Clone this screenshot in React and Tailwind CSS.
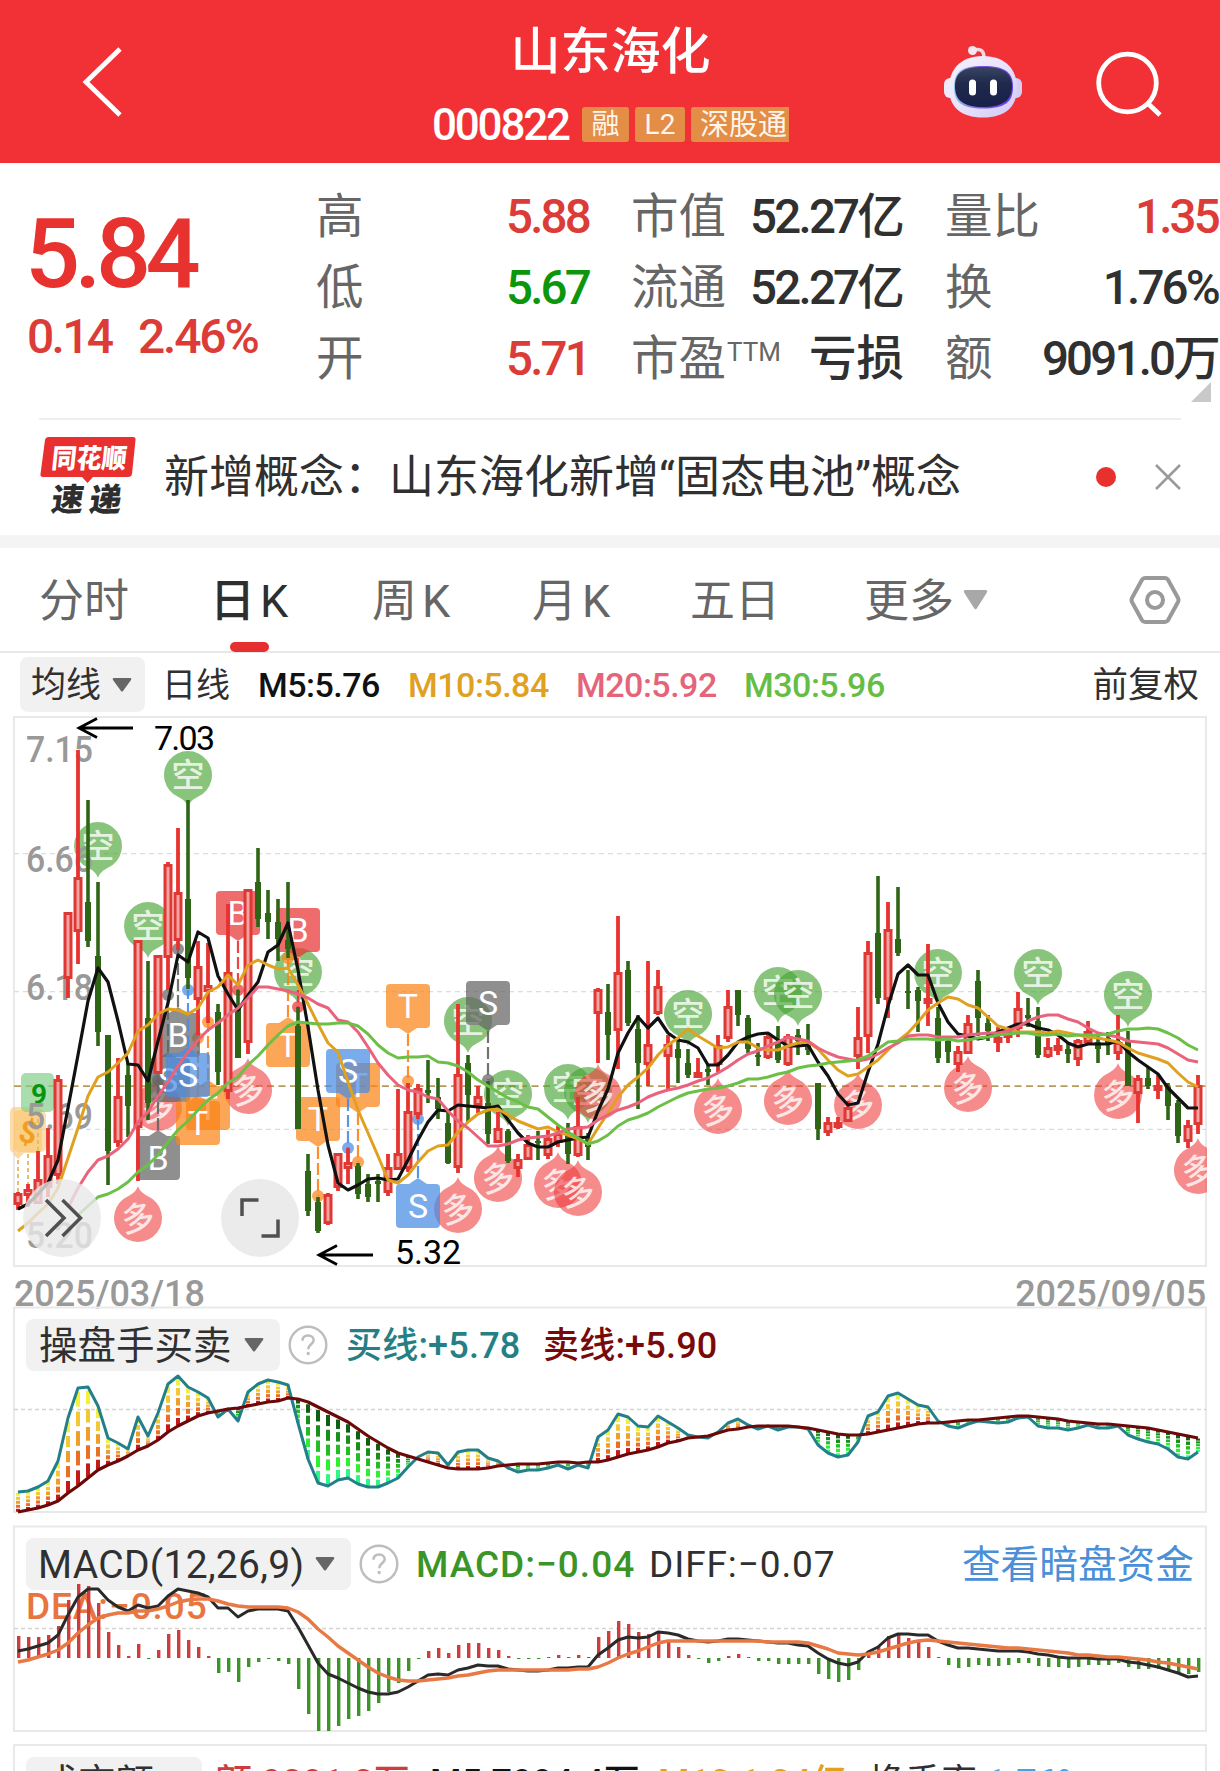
import React from "react";
import { clsx } from "clsx";

const FONT = "font-['Roboto','Noto_Sans_CJK_SC',sans-serif]";

// candle: [direction, high, bodyTop, bodyBottom, low]
const candles = [
  ["r", 1192, 1194, 1203, 1210], ["r", 1184, 1190, 1194, 1207], ["r", 1151, 1180, 1202, 1203], ["r", 1128, 1156, 1186, 1197],
  ["r", 1075, 1080, 1174, 1184], ["r", 912, 913, 977, 998], ["r", 750, 878, 930, 964], ["g", 800, 902, 941, 947],
  ["g", 882, 956, 1032, 1046], ["g", 1035, 1035, 1151, 1185], ["r", 1058, 1097, 1141, 1147], ["g", 1063, 1075, 1106, 1137],
  ["r", 940, 941, 1126, 1181], ["g", 961, 1018, 1103, 1120], ["r", 955, 956, 1072, 1073], ["r", 862, 865, 956, 990],
  ["r", 828, 893, 939, 950], ["g", 800, 899, 978, 989], ["r", 941, 967, 998, 1035], ["r", 943, 986, 990, 1023],
  ["g", 1004, 1012, 1072, 1085], ["r", 904, 973, 1090, 1099], ["g", 990, 1008, 1058, 1058], ["r", 889, 890, 1041, 1054],
  ["g", 848, 882, 919, 927], ["g", 890, 913, 922, 939], ["g", 899, 922, 939, 961], ["g", 882, 940, 949, 958],
  ["g", 1007, 1026, 1129, 1129], ["g", 1154, 1171, 1211, 1216], ["g", 1197, 1202, 1231, 1233], ["r", 1193, 1195, 1222, 1225],
  ["r", 1153, 1154, 1186, 1191], ["r", 1148, 1163, 1167, 1184], ["g", 1163, 1166, 1194, 1199], ["g", 1174, 1184, 1197, 1202],
  ["g", 1174, 1181, 1184, 1202], ["r", 1154, 1168, 1191, 1196], ["r", 1089, 1154, 1168, 1170], ["r", 1083, 1112, 1167, 1172],
  ["r", 1084, 1089, 1113, 1119], ["g", 1060, 1090, 1093, 1103], ["g", 1078, 1097, 1109, 1119], ["g", 1112, 1123, 1163, 1164],
  ["r", 1004, 1075, 1166, 1173], ["g", 1055, 1063, 1095, 1122], ["r", 1086, 1097, 1104, 1113], ["g", 1081, 1103, 1134, 1144],
  ["r", 1112, 1129, 1141, 1143], ["g", 1129, 1131, 1161, 1163], ["r", 1154, 1160, 1167, 1177], ["r", 1135, 1145, 1158, 1159],
  ["g", 1131, 1141, 1143, 1160], ["r", 1130, 1139, 1154, 1159], ["r", 1126, 1134, 1141, 1147], ["g", 1123, 1132, 1154, 1164],
  ["r", 1097, 1127, 1154, 1157], ["g", 1133, 1138, 1147, 1160], ["r", 988, 990, 1012, 1063], ["g", 984, 1012, 1035, 1060],
  ["r", 916, 973, 1029, 1069], ["g", 961, 970, 1023, 1026], ["g", 1015, 1029, 1063, 1109], ["r", 961, 1045, 1063, 1086],
  ["r", 970, 987, 1012, 1015], ["r", 1035, 1045, 1055, 1089], ["g", 1038, 1049, 1058, 1083], ["g", 1049, 1063, 1075, 1078],
  ["r", 1058, 1073, 1076, 1077], ["g", 1064, 1069, 1072, 1085], ["r", 1035, 1046, 1063, 1072], ["r", 990, 1007, 1037, 1042],
  ["g", 990, 990, 1015, 1026], ["g", 1015, 1018, 1049, 1053], ["g", 1043, 1055, 1057, 1066], ["r", 1034, 1037, 1056, 1059],
  ["g", 1026, 1042, 1060, 1063], ["r", 1034, 1037, 1063, 1066], ["g", 1029, 1035, 1041, 1055], ["g", 1024, 1045, 1050, 1055],
  ["g", 1083, 1083, 1129, 1140], ["r", 1117, 1123, 1131, 1136], ["r", 1117, 1123, 1126, 1129], ["r", 1101, 1108, 1120, 1121],
  ["r", 1007, 1038, 1055, 1069], ["r", 941, 953, 1035, 1053], ["g", 876, 933, 998, 1004], ["r", 902, 930, 998, 1018],
  ["g", 887, 939, 953, 956], ["g", 970, 991, 993, 1009], ["g", 987, 990, 1001, 1032], ["r", 944, 999, 1002, 1026],
  ["g", 1007, 1018, 1058, 1063], ["g", 1040, 1041, 1052, 1063], ["r", 1046, 1052, 1063, 1072], ["r", 1015, 1024, 1052, 1053],
  ["g", 970, 981, 1018, 1036], ["g", 1015, 1023, 1031, 1041], ["r", 1027, 1038, 1041, 1052], ["r", 1027, 1032, 1036, 1043],
  ["r", 992, 1009, 1027, 1037], ["g", 998, 1015, 1018, 1027], ["g", 1007, 1021, 1055, 1058], ["r", 1038, 1048, 1055, 1058],
  ["r", 1038, 1046, 1049, 1055], ["g", 1043, 1049, 1054, 1063], ["r", 1039, 1041, 1058, 1066], ["r", 1021, 1032, 1041, 1042],
  ["g", 1033, 1042, 1049, 1063], ["g", 1032, 1038, 1045, 1055], ["r", 1015, 1043, 1052, 1060], ["g", 1031, 1040, 1086, 1086],
  ["r", 1075, 1079, 1092, 1123], ["g", 1067, 1078, 1086, 1089], ["r", 1075, 1086, 1089, 1099], ["g", 1083, 1087, 1106, 1120],
  ["g", 1100, 1103, 1136, 1143], ["r", 1120, 1126, 1140, 1148], ["r", 1075, 1086, 1123, 1134],
];

const ma5 = [
  1209, 1204, 1194, 1183, 1160, 1108, 1055, 1001, 968, 982, 1021, 1064, 1065, 1081, 1041, 1003, 955, 962, 932, 938,
  976, 994, 1010, 995, 982, 952, 945, 923, 970, 1027, 1090, 1145, 1183, 1190, 1185, 1179, 1178, 1180, 1179, 1160,
  1140, 1122, 1110, 1111, 1105, 1106, 1107, 1108, 1106, 1120, 1133, 1143, 1147, 1147, 1142, 1140, 1138, 1137, 1111, 1089,
  1053, 1033, 1017, 1028, 1018, 1033, 1040, 1042, 1048, 1065, 1065, 1055, 1042, 1037, 1034, 1033, 1040, 1046, 1046, 1045,
  1062, 1076, 1094, 1105, 1103, 1072, 1044, 1006, 974, 965, 975, 975, 1003, 1022, 1034, 1036, 1039, 1037, 1032, 1028,
  1024, 1024, 1028, 1030, 1035, 1043, 1047, 1044, 1044, 1044, 1041, 1052, 1060, 1067, 1074, 1088, 1098, 1108, 1108,
];
const ma10 = [
  1231, 1223, 1213, 1204, 1188, 1158, 1128, 1096, 1077, 1072, 1063, 1053, 1031, 1025, 1014, 1009, 1010, 1014, 1008, 992,
  987, 975, 985, 965, 960, 965, 969, 968, 985, 1004, 1024, 1043, 1052, 1082, 1110, 1133, 1156, 1180, 1183, 1175,
  1162, 1151, 1146, 1145, 1132, 1122, 1114, 1110, 1109, 1115, 1121, 1125, 1129, 1127, 1132, 1135, 1139, 1144, 1128, 1113,
  1097, 1085, 1077, 1068, 1055, 1045, 1038, 1029, 1036, 1042, 1048, 1047, 1042, 1042, 1048, 1050, 1050, 1046, 1043, 1042,
  1049, 1060, 1070, 1076, 1074, 1067, 1060, 1050, 1041, 1033, 1022, 1010, 1003, 997, 999, 1005, 1008, 1017, 1026, 1029,
  1032, 1032, 1032, 1033, 1031, 1033, 1035, 1037, 1038, 1040, 1042, 1048, 1053, 1056, 1059, 1063, 1073, 1082, 1087,
];
const ma20 = [
  1208, 1188, 1172, 1160, 1156, 1149, 1139, 1122, 1112, 1096, 1082, 1066, 1052, 1040, 1030, 1023, 1015, 1008, 998, 987,
  987, 989, 991, 994, 998, 1004, 1008, 1020, 1022, 1032, 1047, 1063, 1075, 1085, 1090, 1092, 1097, 1099, 1111, 1121,
  1128, 1137, 1146, 1146, 1144, 1140, 1138, 1137, 1136, 1133, 1129, 1128, 1127, 1120, 1115, 1110, 1107, 1103, 1097, 1093,
  1090, 1088, 1085, 1081, 1078, 1073, 1067, 1060, 1054, 1051, 1046, 1042, 1037, 1039, 1041, 1048, 1053, 1057, 1059, 1061,
  1059, 1054, 1048, 1043, 1036, 1035, 1035, 1037, 1037, 1037, 1035, 1034, 1033, 1033, 1031, 1027, 1021, 1017, 1015, 1015,
  1019, 1022, 1028, 1033, 1035, 1037, 1041, 1042, 1043, 1044, 1048, 1054, 1060, 1062,
];
const ma30 = [
  1215, 1206, 1197, 1194, 1189, 1182, 1172, 1165, 1155, 1142, 1130, 1121, 1110, 1100, 1093, 1083, 1077, 1065, 1056, 1045,
  1035, 1026, 1022, 1023, 1024, 1024, 1023, 1023, 1026, 1034, 1045, 1053, 1058, 1057, 1057, 1056, 1062, 1063, 1066, 1072,
  1080, 1086, 1092, 1098, 1102, 1107, 1109, 1117, 1125, 1132, 1138, 1144, 1141, 1135, 1126, 1120, 1117, 1113, 1107, 1102,
  1097, 1093, 1091, 1089, 1088, 1086, 1083, 1079, 1079, 1077, 1074, 1072, 1068, 1066, 1065, 1063, 1062, 1061, 1060, 1056,
  1049, 1042, 1041, 1039, 1039, 1039, 1040, 1039, 1041, 1040, 1038, 1037, 1035, 1034, 1033, 1033, 1035, 1035, 1034, 1036,
  1035, 1035, 1035, 1034, 1031, 1029, 1029, 1028, 1029, 1033, 1038, 1045, 1050,
];

const buyLine = [
  1492, 1491, 1487, 1481, 1461, 1418, 1388, 1387, 1406, 1438, 1443, 1449, 1417, 1436, 1413, 1384, 1376, 1387, 1392, 1398,
  1417, 1409, 1421, 1392, 1384, 1380, 1382, 1385, 1423, 1459, 1483, 1486, 1480, 1478, 1484, 1487, 1487, 1483, 1478, 1467,
  1457, 1452, 1453, 1465, 1452, 1450, 1450, 1458, 1461, 1468, 1472, 1470, 1470, 1468, 1465, 1469, 1465, 1468, 1437, 1430,
  1414, 1417, 1426, 1427, 1416, 1422, 1428, 1435, 1437, 1438, 1432, 1423, 1419, 1425, 1429, 1426, 1430, 1427, 1427, 1429,
  1445, 1453, 1457, 1455, 1442, 1416, 1412, 1396, 1393, 1399, 1405, 1407, 1421, 1426, 1428, 1424, 1421, 1422, 1423, 1422,
  1418, 1417, 1426, 1428, 1428, 1430, 1428, 1425, 1428, 1428, 1426, 1435, 1439, 1442, 1444, 1449, 1457, 1459, 1452,
];
const sellLine = [
  1512, 1510, 1508, 1505, 1501, 1493, 1486, 1478, 1470, 1465, 1461, 1456, 1450, 1446, 1440, 1432, 1426, 1421, 1416, 1413,
  1411, 1409, 1408, 1406, 1404, 1402, 1401, 1398, 1399, 1402, 1407, 1412, 1417, 1422, 1429, 1436, 1442, 1448, 1453, 1456,
  1459, 1462, 1465, 1468, 1469, 1469, 1469, 1468, 1466, 1465, 1464, 1464, 1464, 1463, 1462, 1462, 1463, 1462, 1462, 1460,
  1457, 1454, 1452, 1450, 1447, 1443, 1441, 1438, 1437, 1436, 1433, 1430, 1429, 1427, 1426, 1426, 1426, 1426, 1427, 1428,
  1430, 1432, 1434, 1435, 1435, 1434, 1432, 1430, 1428, 1426, 1424, 1423, 1423, 1422, 1421, 1420, 1420, 1419, 1418, 1417,
  1416, 1416, 1417, 1418, 1419, 1421, 1422, 1423, 1424, 1424, 1425, 1426, 1427, 1428, 1430, 1432, 1434, 1436, 1438,
];

const MACD_ZERO = 1658;
const macdBars = [
  1636, 1637, 1637, 1635, 1626, 1600, 1584, 1586, 1603, 1632, 1645, 1656, 1644, 1659, 1650, 1634, 1630, 1640, 1647, 1656,
  1673, 1672, 1682, 1667, 1662, 1659, 1661, 1664, 1689, 1714, 1731, 1731, 1726, 1719, 1716, 1711, 1703, 1692, 1683, 1671,
  1659, 1651, 1648, 1653, 1645, 1643, 1643, 1648, 1650, 1656, 1659, 1659, 1659, 1657, 1655, 1657, 1655, 1657, 1637, 1631,
  1621, 1624, 1632, 1634, 1633, 1641, 1647, 1655, 1659, 1663, 1661, 1656, 1654, 1657, 1661, 1661, 1664, 1664, 1664, 1664,
  1674, 1679, 1682, 1680, 1670, 1651, 1647, 1636, 1634, 1638, 1640, 1647, 1657, 1665, 1668, 1667, 1665, 1666, 1666, 1665,
  1663, 1663, 1666, 1667, 1667, 1668, 1667, 1665, 1665, 1665, 1663, 1667, 1669, 1669, 1669, 1670, 1674, 1674, 1672,
];
const diffLine = [
  1651, 1649, 1646, 1643, 1635, 1615, 1597, 1589, 1589, 1600, 1607, 1611, 1605, 1608, 1606, 1596, 1589, 1591, 1593, 1597,
  1608, 1608, 1617, 1611, 1609, 1609, 1609, 1611, 1627, 1645, 1663, 1674, 1678, 1683, 1688, 1692, 1694, 1694, 1692, 1687,
  1681, 1675, 1674, 1675, 1670, 1668, 1665, 1666, 1666, 1669, 1670, 1671, 1671, 1670, 1668, 1668, 1667, 1667, 1655, 1648,
  1640, 1637, 1638, 1637, 1632, 1633, 1635, 1639, 1641, 1642, 1641, 1639, 1639, 1640, 1641, 1642, 1643, 1643, 1645, 1646,
  1653, 1659, 1663, 1665, 1662, 1652, 1647, 1638, 1634, 1634, 1635, 1635, 1641, 1645, 1648, 1648, 1649, 1650, 1651, 1651,
  1651, 1652, 1654, 1655, 1657, 1658, 1658, 1658, 1659, 1659, 1659, 1662, 1663, 1665, 1667, 1670, 1673, 1677, 1676,
];
const deaLine = [
  1662, 1660, 1657, 1654, 1650, 1643, 1633, 1625, 1618, 1615, 1613, 1613, 1611, 1611, 1609, 1606, 1602, 1600, 1599, 1599,
  1601, 1604, 1606, 1607, 1607, 1607, 1607, 1608, 1612, 1619, 1629, 1637, 1646, 1653, 1660, 1667, 1673, 1677, 1680, 1681,
  1681, 1680, 1679, 1678, 1676, 1675, 1673, 1671, 1670, 1670, 1670, 1670, 1670, 1670, 1670, 1670, 1669, 1669, 1667, 1663,
  1658, 1654, 1651, 1647, 1643, 1641, 1641, 1641, 1641, 1641, 1641, 1641, 1641, 1641, 1641, 1642, 1642, 1642, 1642, 1643,
  1646, 1649, 1653, 1654, 1655, 1654, 1652, 1649, 1646, 1643, 1641, 1640, 1641, 1642, 1643, 1644, 1645, 1646, 1647, 1648,
  1648, 1649, 1650, 1651, 1652, 1653, 1655, 1655, 1656, 1657, 1657, 1658, 1659, 1660, 1662, 1663, 1665, 1667, 1669,
];

const shortPins = [
  [188, 775], [98, 846], [148, 926], [298, 972], [468, 1021], [508, 1094], [568, 1088], [588, 1091],
  [688, 1014], [778, 991], [798, 994], [938, 973], [1038, 973], [1128, 995],
];
const longPins = [
  [138, 1218], [158, 1107], [248, 1090], [458, 1209], [498, 1178], [558, 1184], [578, 1192], [598, 1096],
  [718, 1110], [788, 1101], [858, 1105], [968, 1088], [1118, 1095], [1198, 1170],
];

// trade flags: [x, centre y, letter, colour, y of the anchor dot]
const RED = "#e83333";
const GRAY = "#646464";
const BLUE = "#478ce5";
const ORANGE = "#fb8317";
const flags = [
  [298, 930, "B", RED, 1007],
  [238, 913, "B", RED, 990],
  [288, 1045, "T", ORANGE, 958],
  [158, 1158, "B", GRAY, 1080],
  [168, 1080, "S", GRAY, 995],
  [208, 1108, "T", ORANGE, 1022],
  [198, 1123, "T", ORANGE, 1038],
  [178, 1035, "B", GRAY, 949],
  [188, 1075, "S", BLUE, 990],
  [318, 1119, "T", ORANGE, 1196],
  [358, 1085, "T", ORANGE, 1162],
  [348, 1071, "S", BLUE, 1148],
  [408, 1006, "T", ORANGE, 1081],
  [488, 1003, "S", GRAY, 1080],
  [418, 1206, "S", BLUE, 1119],
];

const px = (i) => 18 + i * 10;
const toPoints = (values, start = 0) =>
  values.map((y, i) => `${px(i + start)},${y}`).join(" ");

function Line({ data, start, color, width = 3 }) {
  return (
    <polyline
      points={toPoints(data, start)}
      fill="none"
      stroke={color}
      strokeWidth={width}
      strokeLinejoin="round"
    />
  );
}

function Candle({ i, c }) {
  const [dir, high, top, bottom, low] = c;
  const x = px(i);
  if (dir === "g") {
    return (
      <g fill="#2f6516">
        <rect x={x - 1.8} y={high} width="3.6" height={low - high} />
        <rect x={x - 3} y={top} width="6" height={Math.max(bottom - top, 2)} />
      </g>
    );
  }
  return (
    <g>
      <rect x={x - 1.9} y={high} width="3.8" height={low - high} fill="#e83230" />
      <rect
        x={x - 3}
        y={top + 0.5}
        width="6"
        height={Math.max(bottom - top, 1)}
        fill="#f3a3a0"
        stroke="#dd3834"
        strokeWidth="3"
      />
    </g>
  );
}

function Pin({ x, y, up }) {
  return (
    <g>
      <path
        d={
          up
            ? `M${x} ${y - 32}C${x + 2} ${y - 26} ${x + 6} ${y - 24} ${x + 10} ${y - 21.8}A24 24 0 1 1 ${x - 10} ${y - 21.8}C${x - 6} ${y - 24} ${x - 2} ${y - 26} ${x} ${y - 32}Z`
            : `M${x} ${y + 32}C${x + 2} ${y + 26} ${x + 6} ${y + 24} ${x + 10} ${y + 21.8}A24 24 0 1 0 ${x - 10} ${y + 21.8}C${x - 6} ${y + 24} ${x - 2} ${y + 26} ${x} ${y + 32}Z`
        }
        fill={up ? "#ef3e3e" : "#4aa535"}
        fillOpacity={up ? 0.6 : 0.65}
      />
      <text
        x={x}
        y={y + 12}
        textAnchor="middle"
        fontSize="33"
        fontWeight="500"
        fill="#fff"
        fillOpacity="0.8"
        transform={up ? `rotate(-10 ${x} ${y})` : undefined}
      >
        {up ? "多" : "空"}
      </text>
    </g>
  );
}

function Flag({ x, y, letter, color, dot }) {
  const down = dot > y;
  const edge = down ? y + 22 : y - 22;
  const tip = down ? y + 28 : y - 28;
  return (
    <g>
      <path d={`M${x} ${tip}V${dot}`} stroke={color} strokeWidth="2.2" strokeDasharray="12 4" opacity="0.9" />
      <circle cx={x} cy={dot} r="6" fill={color} fillOpacity="0.72" />
      <g fill={color} fillOpacity="0.72">
        <rect x={x - 22} y={y - 22} width="44" height="44" rx="4" />
        <path d={`M${x - 9} ${edge}L${x} ${tip}L${x + 9} ${edge}Z`} />
      </g>
      <text x={x} y={y + 12} textAnchor="middle" fontSize="34" fill="#fff">
        {letter}
      </text>
    </g>
  );
}

function AxisLabel({ y, children }) {
  return (
    <text x="26" y={y} fontSize="37" fontWeight="500" fill="#999" textLength="67" lengthAdjust="spacingAndGlyphs">
      {children}
    </text>
  );
}

function CandleChart() {
  return (
    <svg viewBox="0 716 1220 551" className={clsx("block h-[551px] w-[1220px]", FONT)}>
      <clipPath id="plot">
        <rect x="8" y="716" width="1199" height="551" />
      </clipPath>
      <rect x="14" y="717" width="1192" height="549" fill="none" stroke="#e9e9e9" strokeWidth="2" />
      <g stroke="#dcdcdc" strokeWidth="1.3" strokeDasharray="5 4">
        <path d="M14 853.7H1206M14 991.6H1206M14 1129.4H1206" />
      </g>

      <g stroke="#e3bd72" strokeWidth="2" strokeDasharray="4 3">
        <path d="M18 1160V1192M28 1154V1184" />
        <path d="M38 1112V1151" stroke="#5aa84c" />
      </g>
      <path d="M14 1086.2H1206" stroke="#b59a5c" strokeWidth="1.8" strokeDasharray="7 4.5" />

      <g clipPath="url(#plot)">
        {shortPins.map(([x, y]) => (
          <Pin key={`${x}`} x={x} y={y} />
        ))}
        {longPins.map(([x, y]) => (
          <Pin key={`${x}`} x={x} y={y} up />
        ))}
        {flags.map(([x, y, letter, color, dot]) => (
          <Flag key={`${x}-${y}`} x={x} y={y} letter={letter} color={color} dot={dot} />
        ))}
      </g>

      <rect x="10" y="1107" width="32" height="46" rx="5" fill="#fbc46c" fillOpacity="0.6" />
      <rect x="14" y="1110" width="32" height="42" rx="5" fill="#fbc46c" fillOpacity="0.55" />
      <path d="M12 1153L18 1159L24 1153Z" fill="#fbd9a0" />
      <text x="28" y="1143" textAnchor="middle" fontSize="31" fontWeight="700" fill="#f0a020" transform="rotate(14 28 1133)">
        $
      </text>
      <rect x="21" y="1073" width="33" height="39" rx="5" fill="#86cf8c" fillOpacity="0.7" />
      <text x="39" y="1104" textAnchor="middle" fontSize="28" fontWeight="700" fill="#0b940b">
        9
      </text>

      <AxisLabel y={762}>7.15</AxisLabel>
      <AxisLabel y={872}>6.66</AxisLabel>
      <AxisLabel y={1000}>6.18</AxisLabel>
      <AxisLabel y={1129}>5.69</AxisLabel>
      <AxisLabel y={1248}>5.20</AxisLabel>

      {candles.map((c, i) => (
        <Candle key={i} i={i} c={c} />
      ))}
      <Line data={ma5} color="#111" width={3.2} />
      <Line data={ma10} color="#e0a020" />
      <Line data={ma20} start={5} color="#e9637c" />
      <Line data={ma30} start={6} color="#6cbf47" />

      <g fill="none" stroke="#000" strokeWidth="2.8">
        <path d="M133 728H79M97 718.5L79 728L97 737.5" />
        <path d="M373 1255H319M337 1245.5L319 1255L337 1264.5" />
      </g>
      <g fontSize="34" fill="#000">
        <text x="154" y="750" textLength="61">7.03</text>
        <text x="395" y="1264" textLength="66">5.32</text>
      </g>
    </svg>
  );
}

const warm = ["#f2f03c", "#f2c934", "#ee9f2a", "#ea6f22", "#c41a1a"];
const cool = ["#0f5f12", "#178f19", "#22bd25", "#2df02f", "#2df786"];

function TraderChart() {
  return (
    <svg viewBox="0 1306 1220 208" className="col-start-1 row-start-1 block h-[208px] w-[1220px]">
      <rect x="14" y="1307.5" width="1192" height="204.5" fill="none" stroke="#e9e9e9" strokeWidth="2" />
      <path d="M14 1409.5H1206" stroke="#d4d4d4" strokeWidth="1.3" strokeDasharray="4 3" />
      {buyLine.map((buy, i) => {
        const sell = sellLine[i];
        const top = Math.min(buy, sell);
        const step = Math.abs(buy - sell) / 5;
        const colors = buy < sell ? warm : cool;
        return colors.map((color, k) => (
          <rect key={`${i}-${k}`} x={px(i) - 2} y={top + k * step + step * 0.2} width="4" height={step * 0.75} fill={color} />
        ));
      })}
      <Line data={buyLine} color="#23808a" />
      <Line data={sellLine} color="#6d0808" width={3.2} />
    </svg>
  );
}

function MacdChart() {
  return (
    <svg viewBox="0 1525 1220 208" className="col-start-1 row-start-1 block h-[208px] w-[1220px]">
      <rect x="14" y="1526.5" width="1192" height="204.5" fill="none" stroke="#e9e9e9" strokeWidth="2" />
      <path d="M14 1628.5H1206" stroke="#d4d4d4" strokeWidth="1.3" strokeDasharray="4 3" />
      {macdBars.map((y, i) => (
        <rect
          key={i}
          x={px(i) - 1}
          y={Math.min(y, MACD_ZERO)}
          width="3.4"
          height={Math.abs(y - MACD_ZERO)}
          fill={y < MACD_ZERO ? "#cc3d3d" : "#3b9427"}
        />
      ))}
      <Line data={diffLine} color="#2a2a2a" />
      <Line data={deaLine} color="#e87844" width={3.4} />
    </svg>
  );
}

function Caret({ className }) {
  return (
    <svg viewBox="0 0 20 14" className={className} preserveAspectRatio="none">
      <path d="M1.500 0H18.500Q20 0.500 19 2L11 13Q10 14 9 13L1 2Q0 0.500 1.500 0Z" fill="currentColor" />
    </svg>
  );
}

function Help() {
  return (
    <svg viewBox="0 0 40 40" className="h-10 w-10 shrink-0 text-[#bdbdbd]" fill="none" stroke="currentColor">
      <circle cx="20" cy="20" r="18.300" strokeWidth="2.400" />
      <path d="M14.500 15.800C14.500 12.300 17 10.500 20.200 10.500C23.500 10.500 25.700 12.500 25.700 15.300C25.700 19 20.200 19.200 20.200 24.300" strokeWidth="2.500" />
      <circle cx="20.200" cy="28.500" r="1" strokeWidth="1.500" />
    </svg>
  );
}

function Header() {
  return (
    <header className="flex h-[163px] bg-[#f23136] text-white">
      <div className="flex w-[432px] items-start pt-[46px] pl-[82px]">
        <svg viewBox="0 0 42 72" className="h-[72px] w-[42px]" fill="none" stroke="#fff" strokeWidth="4.800">
          <path d="M38 3L4 36L38 69" />
        </svg>
      </div>
      <div className="flex w-[357px] flex-col items-center">
        <h1 className="mt-[16px] text-[50px] leading-[72px] font-medium">山东海化</h1>
        <div className="mt-[17px] flex h-[38px] w-full items-center">
          <span className="w-[150px] shrink-0 pt-px text-[44px] font-medium tracking-[-2.200px]">000822</span>
          <div className="flex gap-[6px] text-[28px] leading-[36px] text-[#fff5ea]">
            <span className="h-[35px] w-[47px] rounded-[3px] bg-[#e38d46] text-center">融</span>
            <span className="h-[35px] w-[50px] rounded-[3px] bg-[#e38d46] text-center">L2</span>
            <span className="h-[35px] w-[98px] overflow-hidden rounded-l-[3px] bg-[#e38d46] pl-[9px] text-[29px] whitespace-nowrap">深股通</span>
          </div>
        </div>
      </div>
      <div className="flex flex-1 items-start pt-[42px] pl-[153px]">
        <svg viewBox="942 42 82 80" className="h-20 w-[82px]">
          <defs>
            <linearGradient id="shell" x1="0" y1="0" x2="1" y2="1">
              <stop offset="0" stopColor="#f6f2fc" />
              <stop offset="0.500" stopColor="#e9e2fb" />
              <stop offset="1" stopColor="#cfc8f6" />
            </linearGradient>
            <linearGradient id="rim" x1="0" y1="0" x2="1" y2="0">
              <stop offset="0" stopColor="#8fc4e6" />
              <stop offset="0.500" stopColor="#7d4fe0" />
              <stop offset="1" stopColor="#6a3fe6" />
            </linearGradient>
            <linearGradient id="visor" x1="0" y1="0" x2="0" y2="1">
              <stop offset="0" stopColor="#3a4463" />
              <stop offset="0.400" stopColor="#1f2a4c" />
              <stop offset="1" stopColor="#18204a" />
            </linearGradient>
          </defs>
          <path d="M974 50C981 48 984 51 984 58" fill="none" stroke="#f3d9e4" strokeWidth="3.500" />
          <circle cx="972.500" cy="50.500" r="4.500" fill="#f7e6ee" />
          <rect x="944" y="78" width="14" height="20" rx="6" fill="#efeafa" />
          <rect x="1008" y="78" width="14" height="20" rx="6" fill="#d5cdf7" />
          <path d="M983 56C1006 56 1017 70 1017 88C1017 107 1005 117.500 983 117.500C961 117.500 949 107 949 88C949 70 960 56 983 56Z" fill="url(#shell)" />
          <path d="M983 66C1006 66 1013 73 1013 87C1013 102 1005 108.500 983 108.500C961 108.500 954 102 954 87C954 73 960 66 983 66Z" fill="url(#rim)" />
          <path d="M983 67C1005 67 1012 74 1012 86.500C1012 100 1003 107 983 107C963 107 955 100 955 86.500C955 74 961 67 983 67Z" fill="url(#visor)" />
          <rect x="969" y="79.500" width="7" height="16" rx="3.500" fill="#fff" />
          <rect x="990" y="79.500" width="7" height="16" rx="3.500" fill="#fff" />
        </svg>
        <svg viewBox="1094 50 70 70" className="ml-[70px] mt-2 h-[70px] w-[70px]" fill="none" stroke="#fff" strokeWidth="4.800">
          <circle cx="1127.500" cy="83" r="28.800" />
          <path d="M1148 103.500L1160 115" />
        </svg>
      </div>
    </header>
  );
}

function Row({ label, value, className }) {
  return (
    <div className="flex h-[71px] items-center justify-between whitespace-nowrap">
      <span className="text-[47.500px] text-[#666]">{label}</span>
      <span className={clsx("pr-[2px] text-[47.500px] font-medium tracking-[-2.800px]", className)}>{value}</span>
    </div>
  );
}

function Quote() {
  return (
    <section className="flex h-[255px] pt-[19px]">
      <div className="w-[316px] pl-[25px] text-[#e7322f]">
        <div className="mt-[14px] text-[97px] leading-[116px] font-medium tracking-[-5.600px]">5.84</div>
        <div className="mt-[-5px] flex pl-[2px] text-[48px] leading-[60px] font-medium tracking-[-2.700px] text-[#dc3c38]">
          <span className="w-[111px]">0.14</span>
          <span className="tracking-[-2.200px]">2.46%</span>
        </div>
      </div>
      <div className="w-[275px]">
        <Row label="高" value="5.88" className="text-[#dc3c38]" />
        <Row label="低" value="5.67" className="text-[#0c960c]" />
        <Row label="开" value="5.71" className="text-[#dc3c38]" />
      </div>
      <div className="ml-[40px] w-[273px]">
        <Row label="市值" value="52.27亿" className="text-[#303030]" />
        <Row label="流通" value="52.27亿" className="text-[#303030]" />
        <Row
          label={
            <>
              市盈<span className="relative -top-[14px] ml-px text-[26px]">TTM</span>
            </>
          }
          value={<span className="-mr-[2px] tracking-normal">亏损</span>}
          className="text-[#303030]"
        />
      </div>
      <div className="ml-[41px] w-[275px]">
        <Row label="量比" value="1.35" className="text-[#dc3c38]" />
        <Row label="换" value="1.76%" className="text-[#303030]" />
        <Row label="额" value="9091.0万" className="text-[#303030]" />
        <svg viewBox="0 0 20 20" className="mt-[-13px] ml-[246px] h-5 w-5">
          <path d="M20 0V20H0Z" fill="#c9c9c9" />
        </svg>
      </div>
    </section>
  );
}

function News() {
  return (
    <section className="mx-[39px] flex h-[117px] items-center border-t-2 border-[#eee]">
      <svg viewBox="39 436 98 80" className={clsx("mb-1 h-20 w-[98px] shrink-0", FONT)}>
        <path d="M49 437H133Q136 437 135.500 440L132 474Q131.500 477 128 477H93L87.500 483L82 477H43Q40 477 40.500 474L45 440Q45.500 437 49 437Z" fill="#e8302e" />
        <text x="100" y="468" fontSize="27" fontWeight="900" fill="#fff" transform="skewX(-6)" textLength="75" lengthAdjust="spacingAndGlyphs">
          同花顺
        </text>
        <g fontSize="32" fontWeight="900" fill="#2e2e2e" transform="skewX(-8)">
          <text x="122" y="511">速</text>
          <text x="160" y="511">递</text>
        </g>
      </svg>
      <p className="ml-[27px] pt-px text-[45px] whitespace-nowrap text-[#303030]">新增概念：山东海化新增“固态电池”概念</p>
      <span className="mb-[2px] ml-auto h-5 w-5 shrink-0 rounded-full bg-[#e8302e]" />
      <svg viewBox="0 0 26 26" className="mb-[2px] ml-[39px] h-[26px] w-[26px]" stroke="#999" strokeWidth="2.500">
        <path d="M1 1L25 25M25 1L1 25" />
      </svg>
    </section>
  );
}

function Tabs() {
  return (
    <nav className="flex h-[105px] items-center border-b-2 border-[#e8e8e8] pt-[3px] pl-[39px] text-[45px] whitespace-nowrap text-[#666]">
      <span className="w-[173px] pt-px">分时</span>
      <span className="relative w-[160px] pt-px text-[#2e2e2e]">
        <span className="ml-[-2px] tracking-[5px]">
          <span className="font-medium">日</span>K
        </span>
        <i className="absolute top-[75px] left-[18px] h-[10px] w-[39px] rounded-full bg-[#e5302f]" />
      </span>
      <span className="w-[160px] pt-px tracking-[5px]">周K</span>
      <span className="w-[158px] pt-px tracking-[5px]">月K</span>
      <span className="w-[174px] pt-px">五日</span>
      <span className="pt-px">更多</span>
      <Caret className="mb-[2px] ml-[9px] h-5 w-[25px] text-[#a8a8a8]" />
      <svg viewBox="0 0 52 50" className="mb-[2px] ml-[141px] h-[50px] w-[52px]" fill="none" stroke="#999" strokeWidth="4">
        <path d="M16 3H36Q38 3 39 4.700L49 23Q50 25 49 27L39 45.300Q38 47 36 47H16Q14 47 13 45.300L3 27Q2 25 3 23L13 4.700Q14 3 16 3Z" />
        <circle cx="26" cy="25" r="8" />
      </svg>
    </nav>
  );
}

function MaRow() {
  return (
    <div className="flex h-[63px] items-center pl-5 text-[34px] whitespace-nowrap text-[#303030]">
      <button className="flex h-[55px] w-[125px] items-center rounded-lg bg-[#f1f1f1] pl-[11px]">
        <span className="pt-[3px] text-[35px]">均线</span>
        <Caret className="ml-[11px] h-[14px] w-5 text-[#666]" />
      </button>
      <span className="ml-[17px] w-[96px] pt-[2px]">日线</span>
      <span className="w-[150px] pt-[2px] font-medium tracking-[-0.500px] text-[#111]">M5:5.76</span>
      <span className="w-[168px] pt-[2px] font-medium tracking-[-0.500px] text-[#e0a020]">M10:5.84</span>
      <span className="w-[168px] pt-[2px] font-medium tracking-[-0.500px] text-[#e4647a]">M20:5.92</span>
      <span className="pt-[2px] font-medium tracking-[-0.500px] text-[#66bd44]">M30:5.96</span>
      <span className="mr-[21px] ml-auto pt-[3px] text-[35.500px]">前复权</span>
    </div>
  );
}

export default function App() {
  return (
    <div className={clsx("h-[1771px] w-[1220px] overflow-hidden bg-white", FONT)}>
      <Header />
      <Quote />
      <News />
      <div className="h-[13px] bg-[#f4f4f4]" />
      <Tabs />
      <MaRow />

      <div className="relative h-[551px]">
        <CandleChart />
        <button className="absolute top-[463px] left-[23px] h-[78px] w-[78px] rounded-full bg-[#e9e9e9]/80">
          <svg viewBox="0 0 78 78" fill="none" stroke="#505050" strokeWidth="3.500">
            <path d="M23 21L41 39L23 57M39.500 21L57.500 39L39.500 57" />
          </svg>
        </button>
        <button className="absolute top-[463px] left-[221px] h-[78px] w-[78px] rounded-full bg-[#e9e9e9]/90">
          <svg viewBox="0 0 78 78" fill="none" stroke="#505050" strokeWidth="3.500">
            <path d="M21 37V21H37.500M40.500 57H57V40.500" />
          </svg>
        </button>
      </div>

      <div className="flex h-[39px] items-center justify-between px-[14px] pt-[15px] text-[36px] leading-[39px] font-medium tracking-[-0.100px] text-[#999]">
        <span>2025/03/18</span>
        <span>2025/09/05</span>
      </div>

      <section className="grid h-[208px]">
        <TraderChart />
        <div className="col-start-1 row-start-1 mt-[13px] ml-[26px] flex h-[52px] items-center whitespace-nowrap">
          <button className="flex h-[52px] w-[254px] items-center rounded-lg bg-[#f1f1f1] pl-[13px] text-[38.500px] text-[#303030]">
            <span className="pt-[2px]">操盘手买卖</span>
            <Caret className="ml-[12px] h-[14px] w-5 text-[#666]" />
          </button>
          <span className="ml-[8px]">
            <Help />
          </span>
          <span className="ml-[18px] w-[197px] pt-[2px] text-[36px] font-medium tracking-[0.200px] text-[#258085]">买线:+5.78</span>
          <span className="pt-[2px] text-[36px] font-medium tracking-[0.200px] text-[#780a0a]">卖线:+5.90</span>
        </div>
      </section>

      <section className="mt-[11px] grid h-[208px]">
        <div className="col-start-1 row-start-1 mt-[13px] ml-[26px] text-[37px] whitespace-nowrap">
          <div className="flex h-[52px] items-center">
            <button className="flex h-[52px] w-[325px] items-center rounded-lg bg-[#f1f1f1] pl-[12px] text-left text-[39px] text-[#303030]">
              <span className="w-[277px] pt-[3px] tracking-[0.300px]">MACD(12,26,9)</span>
              <Caret className="h-[14px] w-5 text-[#666]" />
            </button>
            <span className="ml-[8px]">
              <Help />
            </span>
            <span className="ml-[17px] w-[233px] pt-[2px] font-medium tracking-[1px] text-[#3b9427]">MACD:−0.04</span>
            <span className="pt-[2px] tracking-[0.900px] text-[#303030]">DIFF:−0.07</span>
            <a className="mr-[26px] ml-auto pt-[3px] text-[38.700px] text-[#4a8fd8]">查看暗盘资金</a>
          </div>
          <div className="mt-[-6px] text-[37px] leading-[46px] font-medium tracking-[0.900px] text-[#e8743f]">DEA:−0.05</div>
        </div>
        <MacdChart />
      </section>

      <section className="mx-[13px] mt-[11px] h-[80px] border-2 border-[#e9e9e9]">
        <div className="mt-[11px] ml-[11px] flex h-[52px] items-center text-[36px] whitespace-nowrap">
          <button className="flex h-[52px] w-[176px] items-center rounded-lg bg-[#f1f1f1] pl-[14px] text-[38px] text-[#303030]">
            成交额
            <Caret className="ml-[13px] h-[14px] w-5 text-[#666]" />
          </button>
          <span className="ml-[14px] w-[214px] font-medium text-[#cc3d3d]">额:9091.0万</span>
          <span className="w-[228px] font-medium text-[#111]">M5:7994.4万</span>
          <span className="w-[211px] font-medium text-[#e0a020]">M10:1.04亿</span>
          <span className="text-[#303030]">换手率:</span>
          <span className="font-medium text-[#4aa3dd]">1.76%</span>
        </div>
      </section>
    </div>
  );
}
